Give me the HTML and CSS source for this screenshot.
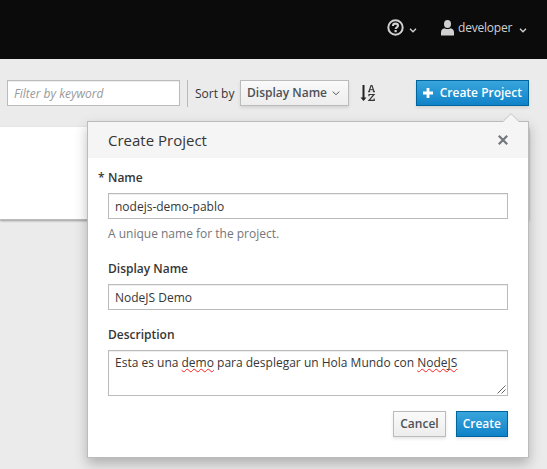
FILE: index.html
```
<!DOCTYPE html>
<html lang="en">
<head>
<meta charset="utf-8">
<title>Projects</title>
<link rel="stylesheet" href="styles.css">
</head>
<body>
<header class="masthead">
  <div class="help">
    <svg width="17" height="17" viewBox="0 0 17 17"><circle cx="8.5" cy="8.5" r="7.2" fill="none" stroke="#d1d1d1" stroke-width="2"/><path d="M5.900 7C6 5.200 7 4.600 8.500 4.600s2.500.8 2.500 2.100c0 1.700-2.300 1.600-2.300 3.300" fill="none" stroke="#d1d1d1" stroke-width="2.100"/><rect x="7.500" y="11" width="2.200" height="2.200" fill="#d1d1d1"/></svg>
    <svg class="caret" width="8" height="5" viewBox="0 0 8 5"><path d="M1 .8l3 3 3-3" fill="none" stroke="#d1d1d1" stroke-width="1.300"/></svg>
  </div>
  <div class="user">
    <svg width="13" height="16" viewBox="0 0 13 16"><ellipse cx="6.500" cy="4" rx="3.500" ry="4" fill="#d1d1d1"/><path d="M0 15.500v-3C0 9.500 1.500 8.500 3.500 8.200c1.800 1.200 4.200 1.200 6 0C11.500 8.500 13 9.500 13 12.500v3z" fill="#d1d1d1"/></svg>
    <span class="username">developer</span>
    <svg class="caret" width="8" height="5" viewBox="0 0 8 5"><path d="M1 .8l3 3 3-3" fill="none" stroke="#d1d1d1" stroke-width="1.300"/></svg>
  </div>
</header>
<div class="toolbar">
  <input class="control filter" type="text" placeholder="Filter by keyword">
  <div class="sort">
    <span class="sort-label">Sort by</span>
    <button class="btn sort-btn"><span>Display Name</span><svg width="8" height="5" viewBox="0 0 8 5"><path d="M.8.600L4 3.800 7.200.600" fill="none" stroke="#4d5258"/></svg></button>
    <svg class="az" width="16" height="17" viewBox="0 0 16 17"><path d="M2.500 0h2v12.500H6.500L3.500 16 .500 12.500h2z" fill="#222"/><path d="M8.900 6.700L11 .600h1l2.100 6.100M9.700 4.700h3.600M8 6.800h2.200M12.800 6.800H15" fill="none" stroke="#333" stroke-width="1.100"/><path d="M9 11.300V9.500h5L9 15.400h5.200v-1.800" fill="none" stroke="#333" stroke-width="1.200"/></svg>
  </div>
  <button class="btn primary add"><svg width="10" height="10" viewBox="0 0 10 10"><path d="M5 0v10M0 5h10" stroke="#fff" stroke-width="2.800"/></svg><span>Create Project</span></button>
  <section class="popover">
    <svg class="arrow" width="16" height="9" viewBox="0 0 16 9"><path d="M0 9L8 1l8 8" fill="#f5f5f5"/><path d="M.500 8L8 .700 15.500 8" fill="none" stroke="#c8c8c8"/></svg>
    <div class="popover-head"><h2>Create Project</h2><svg width="10" height="10" viewBox="0 0 10 10"><path d="M.800.800l8.400 8.400M9.200.800L.800 9.200" stroke="#72767b" stroke-width="2.200"/></svg></div>
    <form class="form">
      <label class="required" for="name">Name</label>
      <input class="control" id="name" type="text" value="nodejs-demo-pablo">
      <p class="hint">A unique name for the project.</p>
      <label for="display">Display Name</label>
      <input class="control" id="display" type="text" value="NodeJS Demo">
      <label class="desc-label">Description</label>
      <div class="control area">Esta es una <span class="misspelt">demo</span> para desplegar un Hola Mundo con <span class="misspelt">NodeJS</span>
        <svg class="grip" width="9" height="9" viewBox="0 0 9 9"><path d="M.500 8.500l8-8M4.500 8.500l4-4" stroke="#555" stroke-width=".9"/></svg>
      </div>
      <div class="actions"><button type="button" class="btn">Cancel</button><button type="button" class="btn primary">Create</button></div>
    </form>
  </section>
</div>
<main class="project"></main>
</body>
</html>
```
FILE: styles.css
```
* { box-sizing: border-box; }
body {
  margin: 0;
  height: 469px;
  overflow: hidden;
  background: #ebebeb;
  color: #363636;
  font: 12px/20px "Open Sans", sans-serif;
}
svg { display: block; flex: none; }
.masthead {
  height: 59px;
  background: #0b0b0b;
  color: #d1d1d1;
  display: flex;
  justify-content: flex-end;
  padding: 18px 20px 0 0;
  gap: 24px;
}
.help, .user { display: flex; align-items: center; height: 20px; }
.help { gap: 5px; margin-top: -1px; }
.help .caret { margin-top: 6px; }
.user { gap: 4px; }
.username { width: 55px; white-space: nowrap; letter-spacing: -.2px; }
.user .caret { margin-left: 2px; }
.caret { margin-top: 4px; }
.toolbar {
  position: relative;
  z-index: 1;
  height: 68px;
  padding: 21px 18px 0 7px;
  display: flex;
  align-items: flex-start;
}
.control {
  display: block;
  width: 100%;
  height: 26px;
  margin: 0;
  padding: 2px 6px;
  border: 1px solid #bbb;
  border-radius: 0;
  background: #fff;
  color: #363636;
  font: 12px/20px "Open Sans", sans-serif;
  box-shadow: inset 0 1px 1px rgba(0, 0, 0, .075);
}
.filter { width: 173px; }
.filter::placeholder { color: #999; font-style: italic; opacity: 1; }
.sort {
  display: flex;
  align-items: center;
  height: 27px;
  margin-left: 7px;
  padding-left: 7px;
  border-left: 1px solid #bbb;
}
.sort-label { width: 45px; white-space: nowrap; }
.btn {
  height: 26px;
  padding: 0 6px;
  border: 1px solid #bbb;
  border-radius: 0;
  background: linear-gradient(#fafafa, #ededed);
  box-shadow: 0 2px 3px rgba(3, 3, 3, .1);
  color: #4d5258;
  font: 600 12px/20px "Open Sans", sans-serif;
  white-space: nowrap;
}
.sort-btn { width: 109px; display: flex; align-items: center; justify-content: space-between; padding-right: 8px; }
.sort > .btn { margin-bottom: 1px; }
.az { margin-left: 11px; }
.primary {
  background: linear-gradient(#39a5dc, #0f82c8);
  border-color: #00659c;
  color: #fff;
}
.add { width: 113px; margin-left: auto; display: flex; align-items: center; justify-content: space-between; }
.popover {
  position: absolute;
  left: 87px;
  top: 62px;
  width: 442px;
  height: 337px;
  border: 1px solid #bbb;
  background: #fff;
  box-shadow: 0 6px 12px rgba(0, 0, 0, .25);
}
.arrow { position: absolute; right: 9px; top: -9px; }
.popover-head {
  height: 36px;
  padding: 0 20px;
  background: #f5f5f5;
  display: flex;
  align-items: center;
  justify-content: space-between;
}
.popover-head h2 { margin: 0; font-size: 15px; font-weight: 400; line-height: 20px; }
.form { padding: 10px 20px 0; }
.form label { display: block; font-weight: 600; height: 25px; }
.required::before { content: "* "; display: inline-block; width: 10px; margin-left: -10px; }
.hint { margin: 5px 0 15px; height: 20px; color: #72767b; }
.form .desc-label { margin-top: 15px; }
.area { position: relative; height: 46px; }
.misspelt { text-decoration: underline wavy #f22; text-decoration-thickness: 1px; text-underline-offset: 1px; text-decoration-skip-ink: none; }
.grip { position: absolute; right: 1px; bottom: 1px; }
.actions { display: flex; justify-content: flex-end; gap: 10px; margin-top: 15px; }
.project {
  height: 93px;
  background: #fff;
  border-bottom: 1px solid #bbb;
  box-shadow: 0 1px 2px rgba(0, 0, 0, .35);
  margin-right: 18px;
}
```
